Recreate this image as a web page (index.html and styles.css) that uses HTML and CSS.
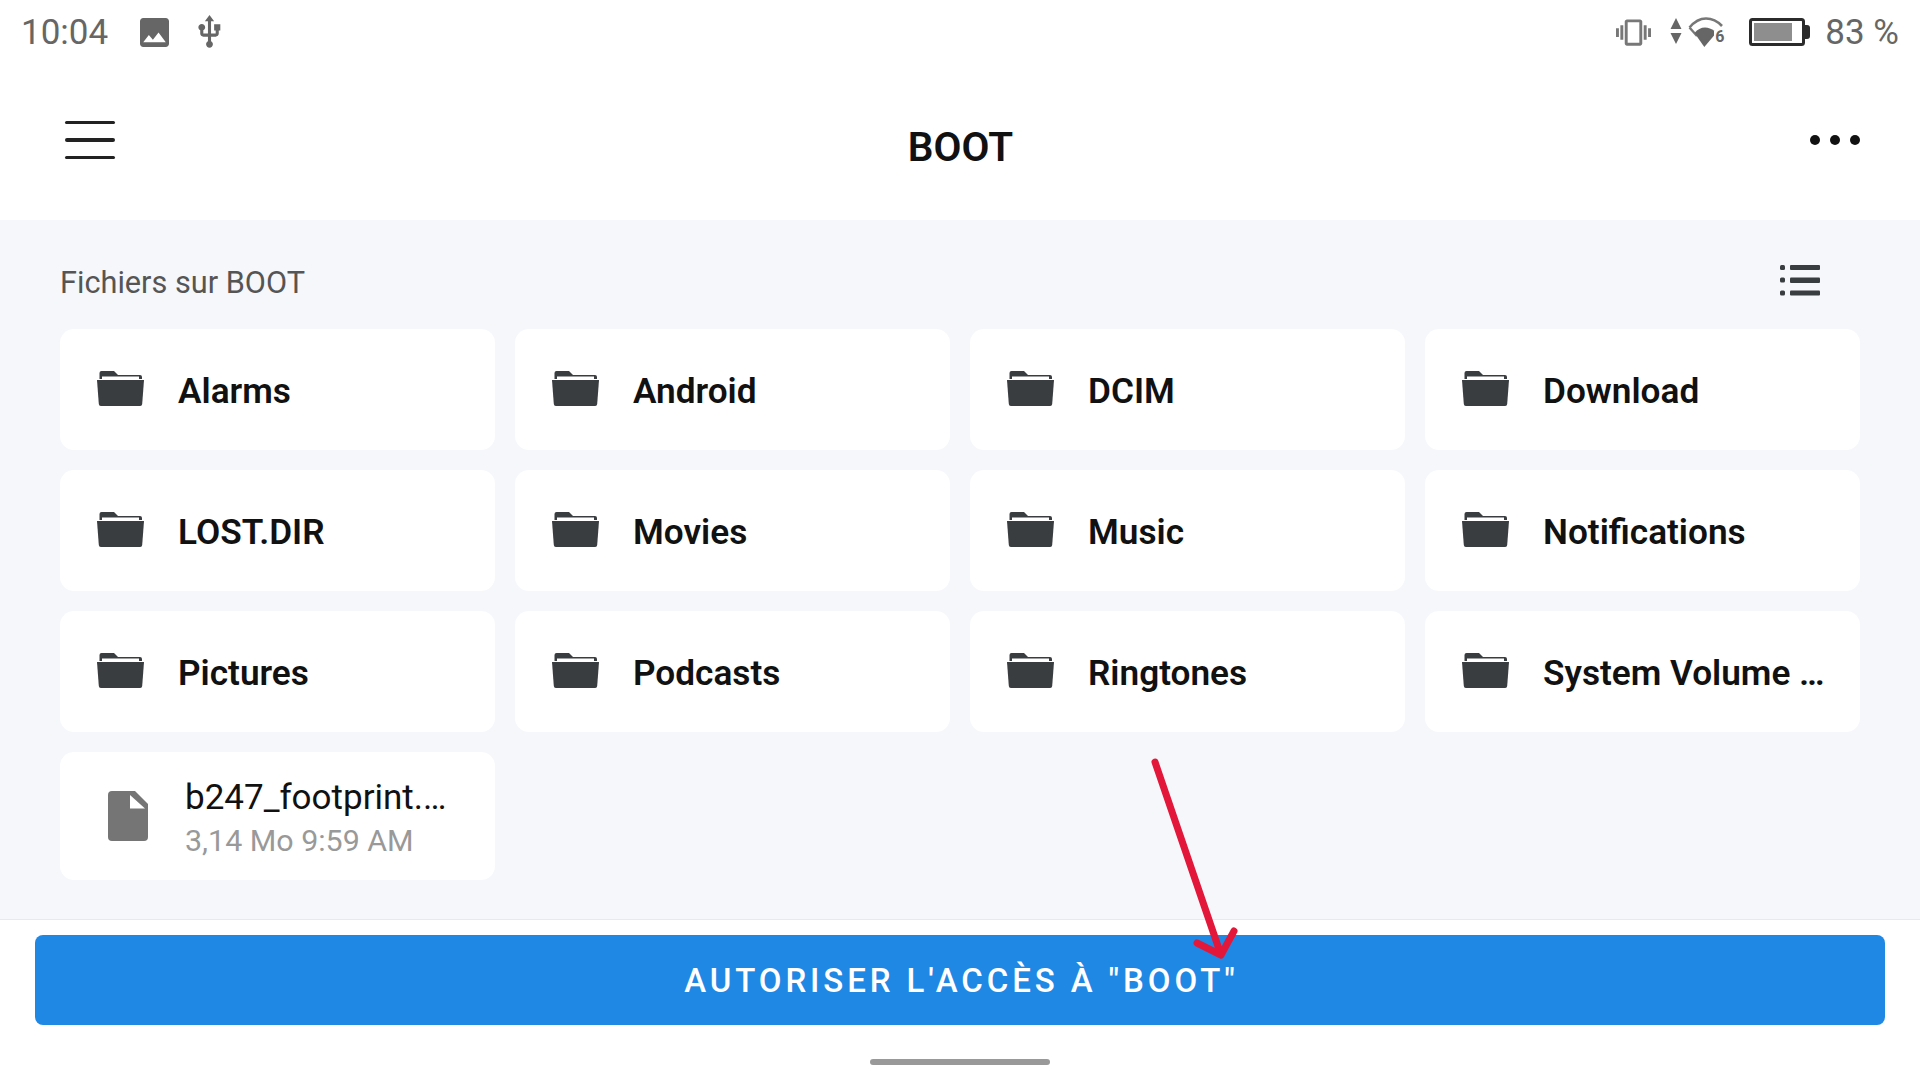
FILE: index.html
```html
<!DOCTYPE html>
<html lang="fr">
<head>
    <meta charset="UTF-8">
    <title>BOOT</title>
    <link rel="stylesheet" href="styles.css">
</head>
<body>
<svg width="0" height="0" class="defs">
    <symbol id="folder" viewBox="0 0 47 36">
        <path fill="#3a3d40" d="M2.5 3q0-2 2-2H17l4 4H43q2 0 2 2V9H2.5Z"/>
        <rect fill="#fff" x="5" y="6.5" width="37" height="2.5"/>
        <path fill="#3a3d40" d="M0 10H47L45.2 34q-.2 2-2 2H3.8q-1.8 0-2-2Z"/>
    </symbol>
</svg>

<div class="page">
    <!-- Status bar -->
    <div class="status-bar">
        <span class="clock">10:04</span>
        <svg class="icon-image" viewBox="3 3 18 18"><path fill="#666" d="M21 19V5c0-1.1-.9-2-2-2H5c-1.1 0-2 .9-2 2v14c0 1.1.9 2 2 2h14c1.1 0 2-.9 2-2zM8.5 13.5l2.5 3.01L14.5 12l4.5 6H5l3.5-4.5z"/></svg>
        <svg class="icon-usb" viewBox="4 1 16 22"><path fill="#666" d="M15 7v4h1v2h-3V5h2l-3-4-3 4h2v8H8v-2.07c.7-.37 1.2-1.08 1.2-1.93 0-1.21-.99-2.2-2.2-2.2-1.21 0-2.2.99-2.2 2.2 0 .85.5 1.56 1.2 1.93V13c0 1.11.89 2 2 2h3v3.05c-.71.37-1.2 1.1-1.2 1.95 0 1.22.99 2.2 2.2 2.2 1.21 0 2.2-.98 2.2-2.2 0-.85-.49-1.58-1.2-1.95V15h3c1.11 0 2-.89 2-2v-2h1V7h-4z"/></svg>
        <div class="status-right">
            <svg class="icon-vibrate" viewBox="0 0 24 24"><path fill="#777" d="M0 15h2V9H0v6zm3 2h2V7H3v10zm19-8v6h2V9h-2zm-3 8h2V7h-2v10zM16.5 3h-9C6.67 3 6 3.67 6 4.5v15c0 .83.67 1.5 1.5 1.5h9c.83 0 1.5-.67 1.5-1.5v-15c0-.83-.67-1.5-1.5-1.5zM16 19H8V5h8v14z"/></svg>
            <svg class="icon-data" viewBox="0 0 12 28"><path fill="#666" d="M6 0L11.5 11H.5ZM.5 15H11.500L6 26Z"/></svg>
            <div class="wifi">
                <svg class="icon-wifi" viewBox="0 0 36 30">
                    <path fill="none" stroke="#777" stroke-width="2.600" d="M1.500 10.500Q9 1.500 18 1.500Q27 1.500 34 9"/>
                    <path fill="none" stroke="#777" stroke-width="2.400" d="M1.500 10.500L9 19"/>
                    <path fill="#666" d="M6.500 16Q11 10.500 17 10.500Q22 10.500 26.500 14V18L16.300 30Z"/>
                </svg>
                <span class="wifi-six">6</span>
            </div>
            <svg class="icon-battery" viewBox="0 0 62 28">
                <rect x="1.500" y="1.500" width="53" height="25" rx="2" fill="#fff" stroke="#2b2b2b" stroke-width="3"/>
                <rect x="5" y="5" width="38" height="18" fill="#8e8e8e"/>
                <path fill="#2b2b2b" d="M55 7h3q3 0 3 3v8q0 3-3 3h-3Z"/>
            </svg>
            <span class="battery-text">83 %</span>
        </div>
    </div>

    <!-- App bar -->
    <div class="app-bar">
        <div class="menu-icon">
            <span></span>
            <span></span>
            <span></span>
        </div>
        <h1 class="title">BOOT</h1>
        <div class="more-icon">
            <span></span>
            <span></span>
            <span></span>
        </div>
    </div>

    <!-- Files -->
    <div class="content">
        <div class="section-head">
            <span class="section-title">Fichiers sur BOOT</span>
            <svg class="icon-list" viewBox="0 0 40 31">
                <g fill="#3a3d40">
                    <rect x="0" y="0" width="5" height="5" rx="1.500"/>
                    <rect x="10" y="0" width="30" height="5" rx="1"/>
                    <rect x="0" y="12.500" width="5" height="5" rx="1.500"/>
                    <rect x="10" y="12.500" width="30" height="5.500" rx="1"/>
                    <rect x="0" y="25.500" width="5" height="5" rx="1.500"/>
                    <rect x="10" y="25.500" width="30" height="5" rx="1"/>
                </g>
            </svg>
        </div>
        <div class="grid">
            <div class="card"><svg class="icon-folder"><use href="#folder"/></svg><span class="card-name">Alarms</span></div>
            <div class="card"><svg class="icon-folder"><use href="#folder"/></svg><span class="card-name">Android</span></div>
            <div class="card"><svg class="icon-folder"><use href="#folder"/></svg><span class="card-name">DCIM</span></div>
            <div class="card"><svg class="icon-folder"><use href="#folder"/></svg><span class="card-name">Download</span></div>
            <div class="card"><svg class="icon-folder"><use href="#folder"/></svg><span class="card-name">LOST.DIR</span></div>
            <div class="card"><svg class="icon-folder"><use href="#folder"/></svg><span class="card-name">Movies</span></div>
            <div class="card"><svg class="icon-folder"><use href="#folder"/></svg><span class="card-name">Music</span></div>
            <div class="card"><svg class="icon-folder"><use href="#folder"/></svg><span class="card-name">Notifications</span></div>
            <div class="card"><svg class="icon-folder"><use href="#folder"/></svg><span class="card-name">Pictures</span></div>
            <div class="card"><svg class="icon-folder"><use href="#folder"/></svg><span class="card-name">Podcasts</span></div>
            <div class="card"><svg class="icon-folder"><use href="#folder"/></svg><span class="card-name">Ringtones</span></div>
            <div class="card"><svg class="icon-folder"><use href="#folder"/></svg><span class="card-name">System Volume …</span></div>
            <div class="card file-card">
                <svg class="icon-file" viewBox="0 0 40 50">
                    <path fill="#757575" d="M4 0H27L40 13V46q0 4-4 4H4q-4 0-4-4V4q0-4 4-4Z"/>
                    <path fill="#fff" d="M22 4V17.500H37Z"/>
                </svg>
                <div class="file-info">
                    <span class="file-name">b247_footprint.…</span>
                    <span class="file-meta">3,14 Mo 9:59 AM</span>
                </div>
            </div>
        </div>
    </div>

    <!-- Bottom action -->
    <div class="footer">
        <button class="allow-btn">AUTORISER L'ACCÈS À "BOOT"</button>
        <div class="home-bar"></div>
    </div>

    <!-- Red arrow drawn over the screenshot -->
    <svg class="red-arrow" viewBox="0 0 100 210">
        <path fill="none" stroke="#e3173a" stroke-width="7" stroke-linecap="round" stroke-linejoin="round" d="M5 7L71 200M47 188L71 200L84 176"/>
    </svg>
</div>
</body>
</html>
```

FILE: styles.css
```css
/* General styles */
body {
    margin: 0;
    font-family: Roboto, "Liberation Sans", sans-serif;
    background-color: #fff;
}

.defs {
    display: block;
    height: 0;
}

.page {
    position: relative;
    display: flex;
    flex-direction: column;
    width: 1920px;
    height: 1080px;
    overflow: hidden;
}

/* Status bar */
.status-bar {
    display: flex;
    align-items: center;
    height: 64px;
    padding: 0 21px;
    color: #666;
    font-size: 35px;
}

.clock {
    width: 119px;
}

.icon-image {
    width: 29px;
    height: 29px;
    margin-right: 28px;
}

.icon-usb {
    width: 25px;
    height: 34px;
}

.status-right {
    display: flex;
    align-items: center;
    margin-left: auto;
}

.icon-vibrate {
    width: 35px;
    height: 35px;
    margin-right: 19px;
}

.icon-data {
    width: 12px;
    height: 28px;
    margin-right: 6px;
}

.wifi {
    position: relative;
    width: 36px;
    height: 30px;
    margin-right: 25px;
}

.icon-wifi {
    display: block;
    width: 36px;
    height: 30px;
}

.wifi-six {
    position: absolute;
    right: 0;
    bottom: 4px;
    padding-left: 1px;
    background-color: #fff;
    font-size: 16px;
    font-weight: 700;
    line-height: 12px;
    color: #666;
}

.icon-battery {
    width: 62px;
    height: 28px;
    margin-right: 14px;
}

/* App bar */
.app-bar {
    display: flex;
    align-items: center;
    justify-content: space-between;
    height: 156px;
    padding: 0 60px 0 65px;
    box-sizing: border-box;
}

.menu-icon {
    display: flex;
    flex-direction: column;
    gap: 14px;
    width: 50px;
    margin-top: -4px;
}

.menu-icon span {
    height: 3.500px;
    border-radius: 2px;
    background-color: #222;
}

.title {
    margin: 10px 4px 0 0;
    font-size: 40.500px;
    font-weight: 600;
    color: #111;
}

.more-icon {
    display: flex;
    gap: 10px;
    margin-top: -4px;
}

.more-icon span {
    width: 10px;
    height: 10px;
    border-radius: 50%;
    background-color: #111;
}

/* File area */
.content {
    flex: 1;
    padding: 0 60px;
    background-color: #f5f7fb;
    border-bottom: 1px solid #e8e9ec;
}

.section-head {
    display: flex;
    align-items: center;
    justify-content: space-between;
    box-sizing: border-box;
    height: 109px;
    padding-top: 12px;
    padding-right: 40px;
}

.section-title {
    margin-top: 4px;
    font-size: 30.700px;
    color: #555;
}

.icon-list {
    width: 40px;
    height: 31px;
}

.grid {
    display: grid;
    grid-template-columns: repeat(4, 435px);
    gap: 20px;
}

.card {
    display: flex;
    align-items: center;
    height: 121px;
    padding-left: 37px;
    box-sizing: border-box;
    border-radius: 14px;
    background-color: #fff;
}

.icon-folder {
    width: 47px;
    height: 36px;
    margin-right: 34px;
    margin-top: -4px;
}

.card-name {
    margin-top: 3px;
    font-size: 35.200px;
    font-weight: 600;
    color: #111;
}

.file-card {
    height: 128px;
    padding-left: 48px;
}

.icon-file {
    width: 40px;
    height: 50px;
    margin-right: 37px;
}

.file-info {
    display: flex;
    flex-direction: column;
    gap: 5px;
    margin-top: 2px;
}

.file-name {
    font-size: 35px;
    color: #111;
}

.file-meta {
    font-size: 30.400px;
    color: #999;
}

/* Bottom action */
.footer {
    display: flex;
    flex-direction: column;
    align-items: center;
    height: 160px;
    padding-top: 15px;
    box-sizing: border-box;
}

.allow-btn {
    width: 1850px;
    height: 90px;
    padding: 0 0 0 3px;
    border: none;
    border-radius: 8px;
    background-color: #1f88e5;
    color: #fff;
    font-family: inherit;
    font-size: 33px;
    font-weight: 500;
    letter-spacing: 3.900px;
}

.home-bar {
    width: 180px;
    height: 6px;
    margin-top: 34px;
    border-radius: 3px;
    background-color: #999;
}

.red-arrow {
    position: absolute;
    left: 1150px;
    top: 755px;
    width: 100px;
    height: 210px;
}
```
